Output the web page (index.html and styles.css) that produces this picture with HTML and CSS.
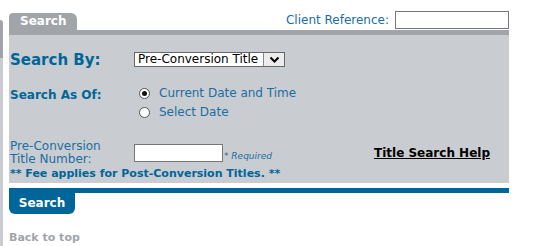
FILE: index.html
```html
<!DOCTYPE html>
<html lang="en">
<head>
  <meta charset="UTF-8">
  <title>Title Search</title>
  <link rel="stylesheet" href="styles.css">
</head>
<body>
  <div class="page">
    <div class="side-edge"></div>
    <div class="main">
      <div class="top-row">
        <div class="tab">Search</div>
        <label class="client-ref">Client Reference: <input type="text" class="client-input"></label>
      </div>

      <div class="panel">
        <div class="row search-by">
          <span class="label big">Search By:</span>
          <div class="select-box">
            <span class="select-text">Pre-Conversion Title</span>
            <span class="select-arrow">
              <svg width="11" height="8" viewBox="0 0 11 8"><path d="M1.5 1.5 L5.5 5.5 L9.5 1.5" fill="none" stroke="#000" stroke-width="2"/></svg>
            </span>
          </div>
        </div>

        <div class="row as-of">
          <span class="label">Search As Of:</span>
          <div class="radios">
            <label class="radio"><span class="dot checked"></span>Current Date and Time</label>
            <label class="radio"><span class="dot"></span>Select Date</label>
          </div>
        </div>

        <div class="row title-no">
          <span class="label plain">Pre-Conversion<br>Title Number:</span>
          <div class="title-field">
            <input type="text" class="title-input">
            <span class="required">* Required</span>
          </div>
          <a href="#" class="help-link">Title Search Help</a>
        </div>

        <div class="fee">** Fee applies for Post-Conversion Titles. **</div>
      </div>

      <div class="bottom-bar"></div>
      <button class="search-btn">Search</button>

      <a href="#" class="back-top">Back to top</a>
    </div>
  </div>
</body>
</html>
```

FILE: styles.css
```css
body {
  margin: 0;
  background: #fff;
  font-family: "DejaVu Sans", Verdana, sans-serif;
}
.page {
  display: flex;
  min-height: 246px;
}
.side-edge {
  width: 3px;
  margin-top: 20px;
  background: linear-gradient(#a1a4a9 0, #a1a4a9 38px, #c9ccd0 38px);
  border-top-right-radius: 3px;
}
.main {
  width: 500px;
  margin-left: 6px;
}
.top-row {
  display: flex;
  justify-content: space-between;
  align-items: flex-end;
  height: 30px;
}
.tab {
  width: 68px;
  height: 17px;
  box-sizing: border-box;
  padding: 1px 0 0 11px;
  background: #a1a4a9;
  border-radius: 4px 6px 0 0;
  color: #fff;
  font-size: 12px;
  font-weight: bold;
}
.client-ref {
  display: flex;
  align-items: center;
  gap: 6px;
  color: #1a6ea3;
  font-size: 12px;
  margin-bottom: 1px;
}
.client-input {
  width: 114px;
  height: 18px;
  box-sizing: border-box;
  border: 1px solid #777;
  margin: 0;
}
.panel {
  background: #c9ccd0;
  border-top: 5px solid #a1a4a9;
  height: 153px;
  box-sizing: border-box;
  padding: 17px 0 0 1px;
}
.row {
  display: flex;
}
.label {
  width: 124px;
  color: #006699;
  font-weight: bold;
  font-size: 12px;
}
.label.big {
  font-size: 15px;
}
.label.plain {
  font-weight: normal;
  line-height: 13px;
  color: #1a6ea3;
}
.search-by {
  align-items: center;
  height: 15px;
}
.select-box {
  display: flex;
  width: 151px;
  height: 15px;
  box-sizing: border-box;
  border: 1px solid #666;
  background: #fff;
  font-size: 12px;
  line-height: 13px;
}
.select-text {
  flex: 1;
  padding-left: 3px;
  color: #000;
}
.select-arrow {
  width: 20px;
  display: flex;
  align-items: center;
  justify-content: center;
  background: #ececec;
  border-left: 1px solid #888;
}
.as-of {
  margin-top: 19px;
}
.as-of .label {
  padding-top: 2px;
}
.radios {
  display: flex;
  flex-direction: column;
  gap: 5px;
  padding-left: 5px;
}
.radio {
  display: flex;
  align-items: center;
  gap: 9px;
  color: #1a6ea3;
  font-size: 12px;
  height: 14px;
}
.dot {
  width: 11px;
  height: 11px;
  box-sizing: border-box;
  border: 1px solid #555;
  border-radius: 50%;
  background: #fff;
  position: relative;
}
.dot.checked::after {
  content: "";
  position: absolute;
  left: 2px;
  top: 2px;
  width: 5px;
  height: 5px;
  border-radius: 50%;
  background: #111;
}
.title-no {
  margin-top: 21px;
  align-items: center;
}
.title-field {
  display: flex;
  align-items: flex-end;
  width: 240px;
}
.title-input {
  width: 89px;
  height: 18px;
  box-sizing: border-box;
  border: 1px solid #777;
  margin: 0;
}
.required {
  font-size: 9px;
  font-style: italic;
  color: #1a6ea3;
  margin-left: 1px;
  margin-bottom: 1px;
}
.help-link {
  color: #000;
  font-weight: bold;
  font-size: 12px;
  text-decoration: underline;
}
.fee {
  color: #006699;
  font-weight: bold;
  font-size: 11px;
  line-height: 13px;
  margin-top: 1px;
}
.bottom-bar {
  height: 5px;
  background: #006699;
  margin-top: 5px;
}
.search-btn {
  display: block;
  width: 66px;
  height: 21px;
  border: none;
  border-radius: 0 0 6px 6px;
  background: #006699;
  color: #fff;
  font-family: inherit;
  font-size: 12px;
  font-weight: bold;
  padding: 0 0 2px 0;
  text-align: center;
}
.back-top {
  display: block;
  margin-top: 17px;
  color: #a1a4a9;
  font-size: 11px;
  font-weight: bold;
  text-decoration: none;
}
```
